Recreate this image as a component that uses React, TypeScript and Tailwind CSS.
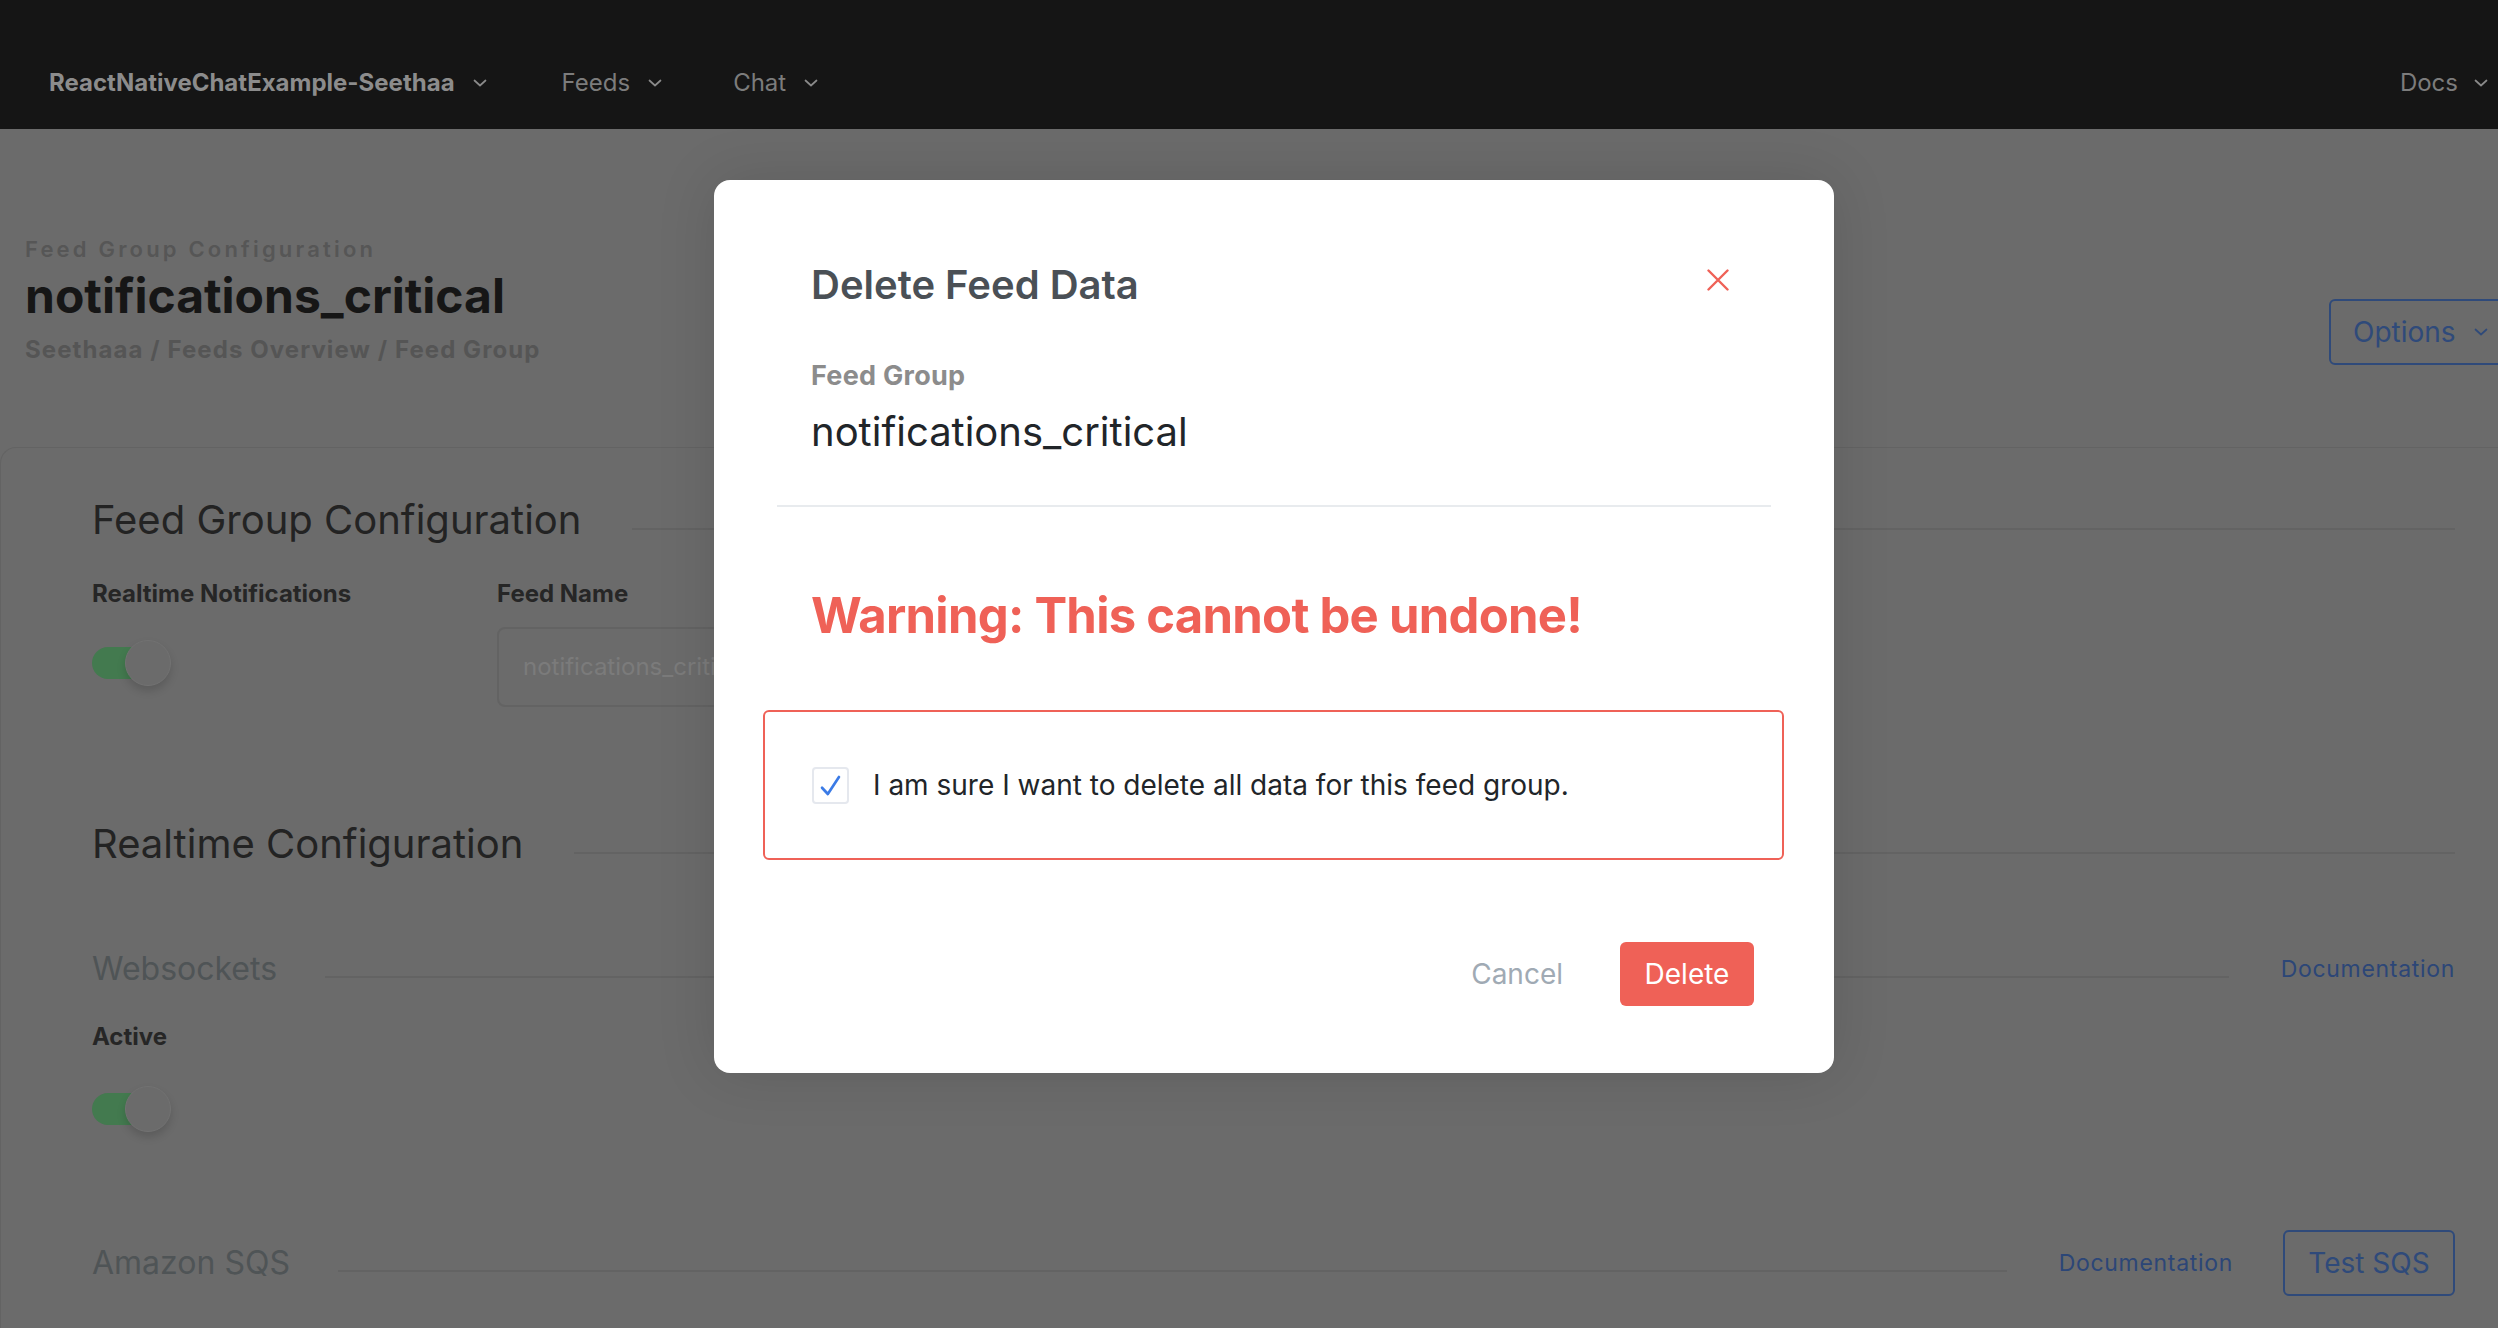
import React from "react"

function Chevron({ className = "" }: { className?: string }) {
  return (
    <svg viewBox="0 0 14 8" className={className} fill="none" stroke="currentColor" strokeWidth="1.7" strokeLinecap="round" strokeLinejoin="round">
      <path d="M1.5 1.5l5.5 5 5.5-5" />
    </svg>
  )
}

function Toggle({ className = "" }: { className?: string }) {
  return (
    <div className={`relative flex h-[46px] w-[80px] items-center ${className}`}>
      <div className="h-[32px] w-[60px] rounded-full bg-[#437a4f]" />
      <div className="absolute left-[33px] top-0 h-[46px] w-[46px] rounded-full border border-[#727272] bg-[#6b6b6b] shadow-[0_5px_8px_rgba(0,0,0,0.15)]" />
    </div>
  )
}

function SectionTitle({ title }: { title: string }) {
  return (
    <div className="flex items-center">
      <h2 className="text-[40px] leading-[44px] text-[#232323]">{title}</h2>
      <div className="ml-[51px] mt-[17px] h-[2px] flex-1 bg-[#636363]" />
    </div>
  )
}

const navItem = "flex items-center gap-[18px]"

export default function App() {
  return (
    <div className="relative min-h-screen w-full overflow-hidden bg-[#6b6b6b] [font-family:Inter,'Noto_Sans',sans-serif]">
      <nav className="flex h-[129px] items-center bg-[#151515] pl-[49px] pr-[10px] pt-[37px] text-[24px]">
        <div className={`${navItem} font-bold text-[#8c8c8c]`}>
          ReactNativeChatExample-Seethaa
          <Chevron className="h-[8px] w-[14px] text-[#8a8a8a]" />
        </div>
        <div className={`${navItem} ml-[75px] text-[#7c7c7c]`}>
          Feeds
          <Chevron className="h-[8px] w-[14px] text-[#8a8a8a]" />
        </div>
        <div className={`${navItem} ml-[71px] text-[#7c7c7c]`}>
          Chat
          <Chevron className="h-[8px] w-[14px] text-[#8a8a8a]" />
        </div>
        <div className="ml-auto flex items-center gap-[16px] text-[#7c7c7c]">
          Docs
          <Chevron className="h-[8px] w-[14px] text-[#8a8a8a]" />
        </div>
      </nav>

      <div className="flex items-end justify-between pl-[25px] pt-[106px]">
        <div>
          <div className="text-[22px] font-semibold leading-[28px] tracking-[0.145em] text-[#565656]">Feed Group Configuration</div>
          <h1 className="mt-[5px] text-[48px] font-bold leading-[56px] text-[#161616]">notifications_critical</h1>
          <div className="mt-[11px] text-[24px] font-bold leading-[30px] tracking-[0.045em] text-[#555555]">
            Seethaaa / Feeds Overview / Feed Group
          </div>
        </div>
        <button className="-mr-[40px] flex h-[66px] w-[209px] items-center gap-[18px] rounded-[6px] border-2 border-[#2f4a7a] pl-[22px] text-[28px] text-[#2f4a7a]">
          Options
          <Chevron className="h-[8px] w-[14px]" />
        </button>
      </div>

      <div className="mt-[82px] rounded-tl-[16px] border-l border-t border-[#636363] pb-[40px] pl-[91px] pr-[43px] pt-[50px]">
        <SectionTitle title="Feed Group Configuration" />

        <div className="mt-[37px] flex">
          <div className="w-[405px]">
            <div className="text-[24px] font-bold leading-[30px] text-[#262626]">Realtime Notifications</div>
            <Toggle className="mt-[31px]" />
          </div>
          <div>
            <div className="text-[24px] font-bold leading-[30px] text-[#262626]">Feed Name</div>
            <div className="mt-[18px] flex h-[80px] w-[640px] items-center rounded-[8px] border-2 border-[#636363] px-[24px] text-[24px] text-[#7b7b7b]">
              notifications_critical
            </div>
          </div>
        </div>

        <div className="mt-[115px]">
          <SectionTitle title="Realtime Configuration" />
        </div>

        <div className="mt-[84px] flex items-center">
          <h3 className="text-[32px] leading-[38px] text-[#4f5456]">Websockets</h3>
          <div className="ml-[48px] mt-[16px] h-[2px] flex-1 bg-[#636363]" />
          <a className="ml-[52px] text-[23px] tracking-[0.03em] text-[#2c4677]">Documentation</a>
        </div>

        <div className="mt-[34px] text-[24px] font-bold leading-[30px] text-[#262626]">Active</div>
        <Toggle className="mt-[34px]" />

        <div className="mt-[98px] flex h-[66px] items-center">
          <h3 className="text-[32px] leading-[38px] text-[#4f5456]">Amazon SQS</h3>
          <div className="ml-[48px] mt-[16px] h-[2px] flex-1 bg-[#636363]" />
          <a className="ml-[52px] text-[23px] tracking-[0.03em] text-[#2c4677]">Documentation</a>
          <button className="ml-[50px] h-[66px] w-[172px] rounded-[6px] border-2 border-[#2f4a7a] text-[28px] text-[#2f4a7a]">
            Test SQS
          </button>
        </div>
      </div>

      {/* modal */}
      <div className="absolute inset-0 pl-[714px] pt-[180px]">
        <div className="w-[1120px] rounded-[16px] bg-white pb-[67px] shadow-[0_0_60px_rgba(0,0,0,0.12)]">
          <div className="flex items-start justify-between pl-[97px] pr-[105px] pt-[83px]">
            <h2 className="text-[40px] font-semibold leading-[44px] text-[#4a5056]">Delete Feed Data</h2>
            <button className="mt-[6px]">
              <svg viewBox="0 0 22 22" className="h-[22px] w-[22px]" fill="none" stroke="#ef6157" strokeWidth="2.4" strokeLinecap="round">
                <path d="M1.5 1.5l19 19M20.5 1.5l-19 19" />
              </svg>
            </button>
          </div>

          <div className="px-[97px]">
            <div className="mt-[52px] text-[27px] font-bold leading-[33px] tracking-[0.01em] text-[#8c8c8c]">Feed Group</div>
            <div className="mt-[16px] text-[40px] leading-[48px] text-[#212529]">notifications_critical</div>
          </div>

          <div className="mx-[63px] mt-[49px] h-[2px] bg-[#e8ebee]" />

          <div className="mt-[81px] px-[97px] text-[49px] font-bold leading-[56px] tracking-[-0.015em] text-[#ef6157]">
            Warning: This cannot be undone!
          </div>

          <div className="ml-[49px] mr-[50px] mt-[66px] flex h-[150px] items-center rounded-[6px] border-2 border-[#ef6157] pl-[47px]">
            <div className="flex h-[37px] w-[37px] items-center justify-center rounded-[4px] border-2 border-[#e5e8ee] bg-white">
              <svg viewBox="0 0 37 37" className="h-[37px] w-[37px]" fill="none" stroke="#3b7be6" strokeWidth="3" strokeLinecap="round" strokeLinejoin="round">
                <path d="M9 21l6.5 7L28 9" />
              </svg>
            </div>
            <span className="ml-[24px] text-[28px] leading-[36px] text-[#212529]">
              I am sure I want to delete all data for this feed group.
            </span>
          </div>

          <div className="mt-[82px] flex items-center justify-end pr-[80px]">
            <button className="text-[28px] text-[#a0aab4]">Cancel</button>
            <button className="ml-[57px] h-[64px] w-[134px] rounded-[6px] bg-[#ef6157] text-[28px] text-white">Delete</button>
          </div>
        </div>
      </div>
    </div>
  )
}
